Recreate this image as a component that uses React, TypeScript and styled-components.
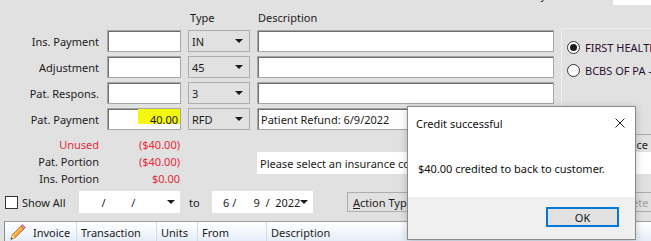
import React from "react";
import styled, { createGlobalStyle } from "styled-components";

const Global = createGlobalStyle`
  html, body { margin: 0; padding: 0; background: #e1e1e1; }
  body {
    font-family: "Noto Sans", "Segoe UI", sans-serif;
    font-size: 11px;
    color: #1b1b1b;
  }
  * { box-sizing: border-box; }
`;

const Screen = styled.div`
  position: relative;
  width: 651px;
  height: 241px;
  overflow: hidden;
  background: #e1e1e1;
`;

const TopStrip = styled.div`
  height: 8px;
  display: flex;
  align-items: flex-start;
  overflow: hidden;
`;

const CutLabel = styled.span`
  flex: none;
  width: 546px;
  text-align: right;
  line-height: 14px;
  margin-top: -12px;
  color: #1b1b1b;
`;

const CutField = styled.div`
  flex: none;
  margin-left: 67px;
  width: 38px;
  height: 5px;
  background: #fff;
`;

const Columns = `
  display: grid;
  grid-template-columns: 100px 74px 62px 297px 1fr;
  column-gap: 7px;
`;

const FormGrid = styled.div`
  ${Columns}
  grid-template-rows: 18px repeat(4, 22px);
  row-gap: 4px;
`;

const ColHead = styled.div<{ $col: number; $pad: number }>`
  grid-column: ${(p) => p.$col};
  grid-row: 1;
  padding-left: ${(p) => p.$pad}px;
  display: flex;
  align-items: center;
`;

const Label = styled.div<{ $row: number; $red?: boolean }>`
  grid-column: 1;
  grid-row: ${(p) => p.$row};
  display: flex;
  align-items: center;
  justify-content: flex-end;
  padding-right: 1px;
  white-space: nowrap;
  color: ${(p) => (p.$red ? "#e42b3a" : "#1b1b1b")};
`;

const TextBox = styled.div<{ $col: number; $row: number }>`
  grid-column: ${(p) => p.$col};
  grid-row: ${(p) => p.$row};
  height: 22px;
  background: #fff;
  border: 1px solid #a6a6a6;
  box-shadow: inset 1px 1px 0 #6f6f6f;
  display: flex;
  align-items: center;
  padding: 0 3px;
  white-space: nowrap;
  overflow: hidden;
`;

const AmountBox = styled(TextBox)`
  justify-content: flex-end;
  padding-right: 2px;
  overflow: visible;
`;

const Highlight = styled.span`
  position: relative;
  z-index: 0;
  &::before {
    content: "";
    position: absolute;
    z-index: -1;
    left: -12px;
    right: -2px;
    top: -3px;
    height: 15px;
    background: #f4f70f;
  }
`;

const Select = styled.div<{ $row: number }>`
  grid-column: 3;
  grid-row: ${(p) => p.$row};
  height: 22px;
  border: 1px solid #adadad;
  background: #e1e1e1;
  display: flex;
  align-items: center;
  justify-content: space-between;
  padding: 0 6px 0 3px;
`;

const Arrow = styled.span`
  flex: none;
  width: 0;
  height: 0;
  border-left: 4px solid transparent;
  border-right: 4px solid transparent;
  border-top: 4px solid #1b1b1b;
`;

const RightPanel = styled.div`
  grid-column: 5;
  grid-row: 2 / span 4;
  margin-top: -2px;
  margin-bottom: -40px;
  border-left: 1px solid #f0f0f0;
  border-top: 1px solid #f0f0f0;
  padding: 12px 0 0 5px;
  display: flex;
  flex-direction: column;
  gap: 10px;
`;

const RadioRow = styled.div`
  display: flex;
  align-items: center;
  gap: 5px;
  white-space: nowrap;
  color: #2a1030;
  height: 13px;
`;

const RadioCircle = styled.span<{ $on?: boolean }>`
  width: 13px;
  height: 13px;
  border-radius: 50%;
  border: 1px solid #333;
  background: #fff;
  display: flex;
  align-items: center;
  justify-content: center;
  flex: none;
  &::after {
    content: "";
    width: 7px;
    height: 7px;
    border-radius: 50%;
    background: ${(p) => (p.$on ? "#1b1b1b" : "transparent")};
  }
`;

const SummaryGrid = styled.div`
  ${Columns}
  grid-template-rows: repeat(3, 17px);
  margin-top: 6px;
`;

const Amount = styled.div<{ $row: number }>`
  grid-column: 2;
  grid-row: ${(p) => p.$row};
  display: flex;
  align-items: center;
  justify-content: flex-end;
  padding-right: 1px;
  color: #e42b3a;
`;

const InfoBox = styled.div`
  grid-column: 4 / span 2;
  grid-row: 2 / span 2;
  margin-top: -1px;
  height: 22px;
  background: #fff;
  display: flex;
  align-items: center;
  padding-left: 3px;
  white-space: nowrap;
  overflow: hidden;
  position: relative;
  z-index: 1;
`;

const SideButton = styled.div`
  grid-column: 5;
  grid-row: 1;
  margin-top: -2px;
  height: 20px;
  border: 1px solid #adadad;
  border-right: none;
  background: #e1e1e1;
  display: flex;
  align-items: center;
  justify-content: flex-end;
  padding-right: 3px;
  white-space: nowrap;
  overflow: hidden;
`;

const ActionRow = styled.div`
  display: flex;
  align-items: center;
  height: 22px;
  margin-top: 4px;
  & > * { flex: none; }
`;

const CheckWrap = styled.label`
  width: 79px;
  display: flex;
  align-items: center;
  gap: 4px;
  padding-left: 5px;
`;

const CheckBox = styled.span`
  flex: none;
  width: 13px;
  height: 13px;
  border: 1px solid #333;
  background: #fff;
`;

const DateBox = styled.div`
  width: 101px;
  height: 22px;
  background: #fff;
  display: flex;
  align-items: center;
  padding-right: 5px;
  white-space: pre;
`;

const DateText = styled.span`
  flex: 1;
  padding-left: 11px;
`;

const ToLabel = styled.span`
  width: 32px;
  padding-left: 9px;
`;

const ActButton = styled.div<{ $w: number; $ml: number; $dim?: boolean }>`
  width: ${(p) => p.$w}px;
  margin-left: ${(p) => p.$ml}px;
  height: 20px;
  border: 1px solid #adadad;
  background: #e1e1e1;
  display: flex;
  align-items: center;
  padding-left: 5px;
  white-space: nowrap;
  overflow: hidden;
  color: ${(p) => (p.$dim ? "#a0a0a0" : "#1b1b1b")};
  & u { text-decoration: underline; }
`;

const GridHeader = styled.div`
  margin-top: 8px;
  margin-left: 4px;
  height: 24px;
  border-left: 1px solid #8c8c8c;
  border-top: 1px solid #a0a0a0;
  background: linear-gradient(#ffffff, #f4f8fd 40%, #dde8f6);
  display: flex;
`;

const HeadCell = styled.div<{ $w: number }>`
  width: ${(p) => p.$w}px;
  flex: none;
  display: flex;
  align-items: center;
  gap: 7px;
  padding-left: 4px;
  padding-bottom: 3px;
  border-right: 1px solid #d5dbe3;
  color: #1b1b1b;
`;

const HeadRest = styled(HeadCell)`
  flex: 1;
  border-right: none;
`;

const Dialog = styled.div`
  position: absolute;
  left: 407px;
  top: 106px;
  width: 229px;
  height: 134px;
  border: 1px solid #8a8a8a;
  background: #fff;
  display: flex;
  flex-direction: column;
  box-shadow: 0 2px 8px rgba(0, 0, 0, 0.22);
  z-index: 5;
`;

const TitleBar = styled.div`
  height: 32px;
  display: flex;
  align-items: center;
  justify-content: space-between;
  padding: 0 10px 0 8px;
  color: #111;
`;

const DialogBody = styled.div`
  flex: 1;
  display: flex;
  align-items: center;
  padding-left: 10px;
  color: #111;
`;

const DialogFooter = styled.div`
  height: 42px;
  background: #f0f0f0;
  display: flex;
  justify-content: flex-end;
  padding: 10px 16px 0 0;
`;

const OkButton = styled.div`
  width: 73px;
  height: 20px;
  border: 2px solid #0078d7;
  background: #e1e1e1;
  display: flex;
  align-items: center;
  justify-content: center;
  color: #111;
`;

const CloseIcon = () => (
  <svg width="10" height="10" viewBox="0 0 10 10">
    <path d="M0.5 0.5 L9.5 9.5 M9.5 0.5 L0.5 9.5" stroke="#222" strokeWidth="1" fill="none" />
  </svg>
);

const PencilIcon = () => (
  <svg width="17" height="17" viewBox="0 0 17 17">
    <path d="M2 15 L3 11 L12 2 L15 5 L6 14 Z" fill="#f2a33a" stroke="#b8741c" strokeWidth="0.8" />
    <path d="M12 2 L13.5 0.5 L16.5 3.5 L15 5 Z" fill="#e98aa6" stroke="#b05a78" strokeWidth="0.8" />
    <path d="M2 15 L3 11 L6 14 Z" fill="#f4d7a8" />
    <path d="M1.6 16.4 L2.4 13.2 L3.8 14.6 Z" fill="#444" />
    <path d="M4 12 L12.5 3.5" stroke="#fbd38a" strokeWidth="1" />
  </svg>
);

const rows = [
  { label: "Ins. Payment", type: "IN", amount: "", desc: "" },
  { label: "Adjustment", type: "45", amount: "", desc: "" },
  { label: "Pat. Respons.", type: "3", amount: "", desc: "" },
  { label: "Pat. Payment", type: "RFD", amount: "40.00", desc: "Patient Refund: 6/9/2022" },
];

export default function App() {
  return (
    <Screen>
      <Global />
      <TopStrip>
        <CutLabel>Policy</CutLabel>
        <CutField />
      </TopStrip>

      <FormGrid>
        <ColHead $col={3} $pad={2}>Type</ColHead>
        <ColHead $col={4} $pad={1}>Description</ColHead>
        {rows.map((r, i) => (
          <React.Fragment key={r.label}>
            <Label $row={i + 2}>{r.label}</Label>
            <AmountBox $col={2} $row={i + 2}>
              {r.amount && <Highlight>{r.amount}</Highlight>}
            </AmountBox>
            <Select $row={i + 2}>
              <span>{r.type}</span>
              <Arrow />
            </Select>
            <TextBox $col={4} $row={i + 2}>{r.desc}</TextBox>
          </React.Fragment>
        ))}
        <RightPanel>
          <RadioRow>
            <RadioCircle $on />
            FIRST HEALTH
          </RadioRow>
          <RadioRow>
            <RadioCircle />
            BCBS OF PA - HIGHMARK
          </RadioRow>
        </RightPanel>
      </FormGrid>

      <SummaryGrid>
        <Label $row={1} $red>Unused</Label>
        <Amount $row={1}>($40.00)</Amount>
        <SideButton>Insurance</SideButton>
        <Label $row={2}>Pat. Portion</Label>
        <Amount $row={2}>($40.00)</Amount>
        <Label $row={3}>Ins. Portion</Label>
        <Amount $row={3}>$0.00</Amount>
        <InfoBox>Please select an insurance company to apply the payment to.</InfoBox>
      </SummaryGrid>

      <ActionRow>
        <CheckWrap>
          <CheckBox />
          Show All
        </CheckWrap>
        <DateBox>
          <DateText>{"    /         /"}</DateText>
          <Arrow />
        </DateBox>
        <ToLabel>to</ToLabel>
        <DateBox>
          <DateText>{"6 /      9  /  2022"}</DateText>
          <Arrow />
        </DateBox>
        <ActButton $w={130} $ml={34}>
          <span><u>A</u>ction Type</span>
        </ActButton>
        <ActButton $w={100} $ml={132} $dim>
          Delete
        </ActButton>
      </ActionRow>

      <GridHeader>
        <HeadCell $w={72}>
          <PencilIcon />
          Invoice
        </HeadCell>
        <HeadCell $w={80}>Transaction</HeadCell>
        <HeadCell $w={41}>Units</HeadCell>
        <HeadCell $w={69}>From</HeadCell>
        <HeadRest $w={0}>Description</HeadRest>
      </GridHeader>

      <Dialog>
        <TitleBar>
          <span>Credit successful</span>
          <CloseIcon />
        </TitleBar>
        <DialogBody>$40.00 credited to back to customer.</DialogBody>
        <DialogFooter>
          <OkButton>OK</OkButton>
        </DialogFooter>
      </Dialog>
    </Screen>
  );
}
